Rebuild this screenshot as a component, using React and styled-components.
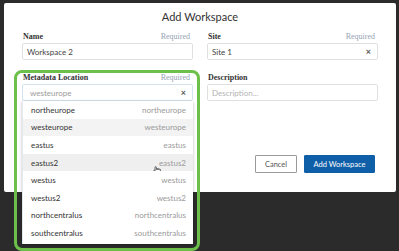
import React from "react";
import styled, { createGlobalStyle } from "styled-components";
import { Pointer } from "lucide-react";

const GlobalStyle = createGlobalStyle`
  html, body {
    margin: 0;
    padding: 0;
    width: 399px;
    height: 251px;
    overflow: hidden;
    background: #2b2b2b;
  }
  body {
    font-family: "Lato", "Liberation Sans", sans-serif;
  }
`;

const regions = [
  "northeurope",
  "westeurope",
  "eastus",
  "eastus2",
  "westus",
  "westus2",
  "northcentralus",
  "southcentralus",
];

function App() {
  return (
    <Page>
      <GlobalStyle />
      <Modal>
        <Title>Add Workspace</Title>
        <Form>
          <Field>
            <LabelRow>
              <Label>Name</Label>
              <Required>Required</Required>
            </LabelRow>
            <Input>Workspace 2</Input>
          </Field>
          <Field>
            <LabelRow>
              <Label>Site</Label>
              <Required>Required</Required>
            </LabelRow>
            <Input>
              Site 1<Clear>×</Clear>
            </Input>
          </Field>
          <MetaField>
            <Highlight />
            <LabelRow>
              <Label>Metadata Location</Label>
              <Required>Required</Required>
            </LabelRow>
            <Input $focused $muted>
              westeurope<Clear>×</Clear>
            </Input>
            <Menu>
              {regions.map((r) => (
                <Option
                  key={r}
                  $selected={r === "westeurope"}
                  $hover={r === "eastus2"}
                >
                  <span>{r}</span>
                  <OptionValue>{r}</OptionValue>
                  {r === "eastus2" && (
                    <Cursor>
                      <Pointer size={8} strokeWidth={2} color="#222" fill="#fff" />
                    </Cursor>
                  )}
                </Option>
              ))}
              <MoreSpace />
            </Menu>
          </MetaField>
          <Field>
            <LabelRow>
              <Label>Description</Label>
            </LabelRow>
            <Input $placeholder>Description...</Input>
          </Field>
        </Form>
        <Footer>
          <Button>Cancel</Button>
          <Button $primary>Add Workspace</Button>
        </Footer>
      </Modal>
    </Page>
  );
}

const Page = styled.div`
  width: 399px;
  height: 251px;
  box-sizing: border-box;
  padding: 3px 3px 0 4px;
`;

const Modal = styled.div`
  width: 392px;
  height: 189px;
  box-sizing: border-box;
  background: #fff;
  border-radius: 2px;
  padding: 0 18px;
  display: flex;
  flex-direction: column;
`;

const Title = styled.h3`
  margin: 0;
  padding: 7px 0 8px;
  text-align: center;
  font-size: 11px;
  line-height: 14px;
  font-weight: 400;
  color: #333;
`;

const Form = styled.div`
  display: grid;
  grid-template-columns: 171px 171px;
  column-gap: 14px;
  row-gap: 13px;
`;

const Field = styled.div`
  display: flex;
  flex-direction: column;
`;

const MetaField = styled(Field)`
  position: relative;
  z-index: 2;
`;

const LabelRow = styled.div`
  display: flex;
  justify-content: space-between;
  align-items: baseline;
  height: 10px;
  line-height: 10px;
  margin-bottom: 1px;
  padding: 0 3px 0 1px;
  font-family: "Liberation Serif", serif;
  font-size: 8px;
`;

const Label = styled.span`
  font-weight: 700;
  color: #333;
`;

const Required = styled.span`
  color: #94a3b4;
`;

const Input = styled.div`
  height: 17px;
  box-sizing: border-box;
  border: 1px solid ${(p) => (p.$focused ? "#d3e3ef" : "#e0e0e0")};
  border-radius: 2px;
  padding: 0 6px 0 ${(p) => (p.$focused ? "7px" : "4px")};
  display: flex;
  align-items: center;
  justify-content: space-between;
  font-size: 8px;
  color: ${(p) => (p.$placeholder ? "#b4b4b4" : p.$muted ? "#9b9b9b" : "#444")};
`;

const Clear = styled.span`
  font-size: 9px;
  font-weight: 700;
  color: #555;
`;

const Menu = styled.div`
  position: absolute;
  top: 100%;
  left: 0;
  width: 171px;
  height: 143px;
  background: #fff;
  border-left: 1px solid #e4e8ec;
  box-sizing: border-box;
  box-shadow: 0 1px 3px rgba(0, 0, 0, 0.25);
  overflow-y: scroll;

  &::-webkit-scrollbar {
    width: 4px;
  }
  &::-webkit-scrollbar-track {
    background: #f3f3f3;
  }
  &::-webkit-scrollbar-thumb {
    background: #c6c6c6;
  }
`;

const Option = styled.div`
  position: relative;
  height: 17.6px;
  display: flex;
  align-items: center;
  justify-content: space-between;
  padding: 0 7px 0 8px;
  font-size: 8px;
  color: #333;
  background: ${(p) =>
    p.$selected ? "#f3f3f3" : p.$hover ? "#efefef" : "#fff"};
`;

const MoreSpace = styled.div`
  height: 36px;
`;

const OptionValue = styled.span`
  color: #9a9a9a;
`;

const Cursor = styled.span`
  position: absolute;
  left: 130px;
  top: 12px;
  display: flex;
`;

const Highlight = styled.div`
  position: absolute;
  left: -8px;
  top: -3px;
  width: 186px;
  height: 181px;
  box-sizing: border-box;
  border: 3px solid #6cc04a;
  border-radius: 8px;
  pointer-events: none;
`;

const Footer = styled.div`
  margin-top: auto;
  padding: 0 3px 19px 0;
  display: flex;
  justify-content: flex-end;
  gap: 7px;
`;

const Button = styled.button`
  height: 18px;
  width: ${(p) => (p.$primary ? "71px" : "42px")};
  padding: 0;
  box-sizing: border-box;
  border: 1px solid ${(p) => (p.$primary ? "#0f5ea8" : "#9a9a9a")};
  border-radius: 1px;
  background: ${(p) => (p.$primary ? "#0f5ea8" : "#fff")};
  color: ${(p) => (p.$primary ? "#fff" : "#555")};
  font-family: "Lato", "Liberation Sans", sans-serif;
  font-size: 7.5px;
  cursor: pointer;
`;

export default App;
